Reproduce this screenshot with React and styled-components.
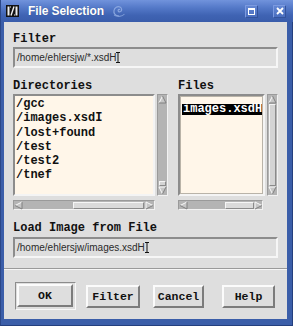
import React from 'react';
import styled, { createGlobalStyle } from 'styled-components';

const Global = createGlobalStyle`
  html, body { margin: 0; padding: 0; background: #dedede; }
  #root { width: 293px; height: 326px; }
`;

const Window = styled.div`
  width: 293px;
  height: 326px;
  box-sizing: border-box;
  display: flex;
  flex-direction: column;
  background: #3b5ea9;
  overflow: hidden;
`;

const TitleBar = styled.div`
  height: 22px;
  flex: none;
  display: flex;
  align-items: center;
  padding: 0 7px 0 5px;
  background: linear-gradient(#7193dc 0%, #5479c8 35%, #3f63b3 70%, #3a5dab 100%);
  border-left: 1px solid #2b4788;
  box-sizing: border-box;
`;

const Title = styled.span`
  margin-left: 9px;
  color: #ffffff;
  font-family: "Liberation Sans", Arial, sans-serif;
  font-weight: bold;
  font-size: 12px;
  letter-spacing: -0.1px;
  text-shadow: 0 0 1px rgba(0, 0, 0, 0.3);
`;

const Swirl = styled.svg`
  margin-left: 8px;
  flex: none;
`;

const Spacer = styled.div`
  flex: 1;
`;

const WinButton = styled.div`
  width: 13px;
  height: 13px;
  box-sizing: border-box;
  margin-left: ${p => p.$ml || 0}px;
  display: flex;
  align-items: center;
  justify-content: center;
  background: linear-gradient(#6386d2, #4a6ebf);
  border: 1px solid #7c9ae0;
  border-bottom-color: #34539c;
  border-right-color: #34539c;
  border-radius: 1px;
`;

const Frame = styled.div`
  flex: 1;
  display: flex;
  padding: 0 5px 6px 4px;
  border-left: 1px solid #2b4788;
  border-right: 1px solid #243f7e;
  border-bottom: 1px solid #243f7e;
  margin: 0;
  box-sizing: border-box;
`;

const Content = styled.div`
  flex: 1;
  margin-left: -1px;
  background: #dedede;
  display: flex;
  flex-direction: column;
  padding: 10px 9px 0 9px;
  box-sizing: border-box;
`;

const Label = styled.div`
  font-family: "Liberation Mono", "DejaVu Sans Mono", monospace;
  font-weight: bold;
  font-size: 12px;
  line-height: 14px;
  height: 14px;
  color: #111;
  margin-top: ${p => p.$mt || 0}px;
  white-space: pre;
`;

const Field = styled.div`
  margin-top: ${p => p.$mt || 0}px;
  height: 21px;
  box-sizing: border-box;
  border: 2px solid;
  border-color: #8c8c8c #f6f6f6 #f6f6f6 #8c8c8c;
  background: #dedede;
  display: flex;
  align-items: center;
  padding-left: 2px;
  font-family: "Liberation Sans", Arial, sans-serif;
  font-size: 10px;
  color: #2a2a2a;
`;

const Caret = styled.svg`
  flex: none;
`;

const LabelRow = styled.div`
  display: grid;
  grid-template-columns: 155px 100px;
  column-gap: 10px;
  margin-top: 11px;
`;

const Lists = styled.div`
  display: grid;
  grid-template-columns: 155px 100px;
  column-gap: 10px;
  margin-top: 1px;
`;

const Pane = styled.div`
  display: grid;
  grid-template-columns: ${p => p.$list}px 11px;
  grid-template-rows: 102px 10px;
  column-gap: ${p => p.$gap}px;
  row-gap: 4px;
`;

const ListBox = styled.div`
  box-sizing: border-box;
  background: #fff6e9;
  border: 2px solid;
  border-color: #8c8c8c #f4f4f4 #f4f4f4 #8c8c8c;
  padding: 1px 1px 0 1px;
  overflow: hidden;
  ${p => p.$focus && `
    padding: 2px 0 0 2px;
    box-shadow: inset 0 0 0 1px #b9b3a8;
    overflow: visible;
  `}
`;

const Item = styled.div`
  font-family: "Liberation Mono", "DejaVu Sans Mono", monospace;
  font-weight: bold;
  font-size: 12px;
  line-height: 14.3px;
  color: #111;
  white-space: pre;
`;

const Selected = styled.span`
  display: inline-block;
  background: #000;
  color: #fff;
  font-family: "Liberation Mono", "DejaVu Sans Mono", monospace;
  font-weight: bold;
  font-size: 12px;
  line-height: 11px;
  padding: 0 0 0 1px;
  white-space: pre;
`;

const VScroll = styled.div`
  box-sizing: border-box;
  border: 1px solid;
  border-color: #9a9a9a #f2f2f2 #f2f2f2 #9a9a9a;
  background: #b4b4b4;
  display: flex;
  flex-direction: column;
  align-items: center;
`;

const VThumb = styled.div`
  flex: ${p => (p.$fill ? 1 : 'none')};
  height: ${p => (p.$fill ? 'auto' : `${p.$size}px`)};
  width: 7px;
  box-sizing: border-box;
  background: #d4d4d4;
  border: 1px solid;
  border-color: #f4f4f4 #8a8a8a #8a8a8a #f4f4f4;
`;

const VTrack = styled.div`
  flex: 1;
  display: flex;
  flex-direction: column;
  align-items: center;
  justify-content: ${p => (p.$end ? 'flex-end' : 'flex-start')};
  width: 100%;
`;

const HScroll = styled.div`
  box-sizing: border-box;
  width: ${p => p.$w}px;
  border: 1px solid;
  border-color: #9a9a9a #f2f2f2 #f2f2f2 #9a9a9a;
  background: #b4b4b4;
  display: flex;
  align-items: center;
`;

const HTrack = styled.div`
  flex: 1;
  display: flex;
  align-items: center;
  height: 100%;
`;

const HThumb = styled.div`
  margin-left: ${p => p.$offset}px;
  width: ${p => p.$size}px;
  height: 7px;
  box-sizing: border-box;
  background: #dadada;
  border: 1px solid;
  border-color: #f6f6f6 #8a8a8a #8a8a8a #f6f6f6;
`;

const Separator = styled.div`
  margin: 10px -9px 0 -9px;
  height: 0;
  border-top: 1px solid #9a9a9a;
  border-bottom: 1px solid #f6f6f6;
`;

const ButtonRow = styled.div`
  margin-top: 12px;
  display: flex;
  align-items: center;
  padding-left: 2px;
`;

const DefaultFrame = styled.div`
  width: 61px;
  height: 28px;
  box-sizing: border-box;
  border: 1px solid;
  border-color: #8c8c8c #f8f8f8 #f8f8f8 #8c8c8c;
  padding: 1px 2px 2px 1px;
  display: flex;
`;

const Button = styled.div`
  width: ${p => p.$w}px;
  height: 23px;
  margin-left: ${p => p.$ml || 0}px;
  box-sizing: border-box;
  border: 2px solid;
  border-color: #fbfbfb #7c7c7c #7c7c7c #fbfbfb;
  background: #dedede;
  display: flex;
  align-items: center;
  justify-content: center;
  font-family: "Liberation Mono", "DejaVu Sans Mono", monospace;
  font-weight: bold;
  font-size: 11.5px;
  color: #111;
`;

const Arrow = ({ dir }) => {
  const pts = {
    up: { poly: '4.5,1 8,8 1,8', light: 'M1,8 L4.5,1', dark: 'M4.5,1 L8,8 L1,8' },
    down: { poly: '1,1 8,1 4.5,8', light: 'M1,1 L8,1 M1,1 L4.5,8', dark: 'M4.5,8 L8,1' },
    left: { poly: '1,4.5 8,1 8,8', light: 'M1,4.5 L8,1', dark: 'M8,1 L8,8 L1,4.5' },
    right: { poly: '1,1 8,4.5 1,8', light: 'M1,8 L1,1 L8,4.5', dark: 'M8,4.5 L1,8' },
  }[dir];
  return (
    <svg width="9" height="9" viewBox="0 0 9 9" style={{ flex: 'none' }}>
      <polygon points={pts.poly} fill="#c6c6c6" />
      <path d={pts.light} stroke="#fafafa" strokeWidth="1" fill="none" />
      <path d={pts.dark} stroke="#808080" strokeWidth="1" fill="none" />
    </svg>
  );
};

const IBeam = () => (
  <Caret width="4" height="11" viewBox="0 0 4 11">
    <path d="M0,0.5 H4 M2,0.5 V10.5 M0,10.5 H4" stroke="#111" strokeWidth="1" fill="none" />
  </Caret>
);

const Logo = () => (
  <svg width="13" height="12" viewBox="0 0 13 12" style={{ flex: 'none' }}>
    <rect x="0" y="0" width="13" height="12" fill="#111" />
    <rect x="1.5" y="1.5" width="2" height="9" fill="#eee" />
    <rect x="9.5" y="1.5" width="2" height="9" fill="#eee" />
    <path d="M8,1.5 L5,10.5" stroke="#eee" strokeWidth="1.4" />
    <rect x="4" y="1.5" width="1" height="1" fill="#eee" />
    <rect x="8" y="9.5" width="1" height="1" fill="#eee" />
  </svg>
);

const dirs = ['/gcc', '/images.xsdI', '/lost+found', '/test', '/test2', '/tnef'];

export default function App() {
  return (
    <>
      <Global />
      <Window>
        <TitleBar>
          <Logo />
          <Title>File Selection</Title>
          <Swirl width="14" height="14" viewBox="0 0 14 14">
            <path
              d="M7,12 C3,12 1.5,9 2,6.5 C2.5,3.5 5.5,2 8,3 C10,4 10.2,6.6 8.6,7.6 C7.2,8.4 5.6,7.4 6.2,6 C6.6,5.2 7.6,5.2 8,5.8"
              stroke="#98b3e6"
              strokeWidth="1.2"
              fill="none"
              opacity="0.8"
            />
            <path d="M2,11 C5,13 10,13 12.5,10" stroke="#8aa6df" strokeWidth="1.1" fill="none" opacity="0.8" />
          </Swirl>
          <Spacer />
          <WinButton>
            <svg width="7" height="7" viewBox="0 0 7 7">
              <rect x="0.5" y="0.5" width="6" height="6" fill="none" stroke="#fff" strokeWidth="1" />
              <rect x="0.5" y="0.5" width="6" height="1.5" fill="#fff" />
            </svg>
          </WinButton>
          <WinButton $ml={15}>
            <svg width="8" height="8" viewBox="0 0 8 8">
              <path d="M1,1 L7,7 M7,1 L1,7" stroke="#fff" strokeWidth="1.8" />
            </svg>
          </WinButton>
        </TitleBar>
        <Frame>
          <Content>
            <Label>Filter</Label>
            <Field $mt={1}>
              /home/ehlersjw/*.xsdH
              <IBeam />
            </Field>

            <LabelRow>
              <Label>Directories</Label>
              <Label>Files</Label>
            </LabelRow>

            <Lists>
              <Pane $list={142} $gap={2}>
                <ListBox>
                  {dirs.map(d => (
                    <Item key={d}>{d}</Item>
                  ))}
                </ListBox>
                <VScroll>
                  <Arrow dir="up" />
                  <VTrack $end>
                    <VThumb $size={5} />
                  </VTrack>
                  <Arrow dir="down" />
                </VScroll>
                <HScroll $w={142}>
                  <Arrow dir="left" />
                  <HTrack>
                    <HThumb $offset={50} $size={71} />
                  </HTrack>
                  <Arrow dir="right" />
                </HScroll>
              </Pane>

              <Pane $list={87} $gap={2}>
                <ListBox $focus>
                  <Selected>images.xsdH</Selected>
                </ListBox>
                <VScroll>
                  <Arrow dir="up" />
                  <VTrack>
                    <VThumb $fill />
                  </VTrack>
                  <Arrow dir="down" />
                </VScroll>
                <HScroll $w={85}>
                  <Arrow dir="left" />
                  <HTrack>
                    <HThumb $offset={37} $size={29} />
                  </HTrack>
                  <Arrow dir="right" />
                </HScroll>
              </Pane>
            </Lists>

            <Label $mt={11}>Load Image from File</Label>
            <Field $mt={2}>
              /home/ehlersjw/images.xsdH
              <IBeam />
            </Field>

            <Separator />

            <ButtonRow>
              <DefaultFrame>
                <Button $w={56}>OK</Button>
              </DefaultFrame>
              <Button $w={54} $ml={10}>Filter</Button>
              <Button $w={51} $ml={13}>Cancel</Button>
              <Button $w={53} $ml={18}>Help</Button>
            </ButtonRow>
          </Content>
        </Frame>
      </Window>
    </>
  );
}
